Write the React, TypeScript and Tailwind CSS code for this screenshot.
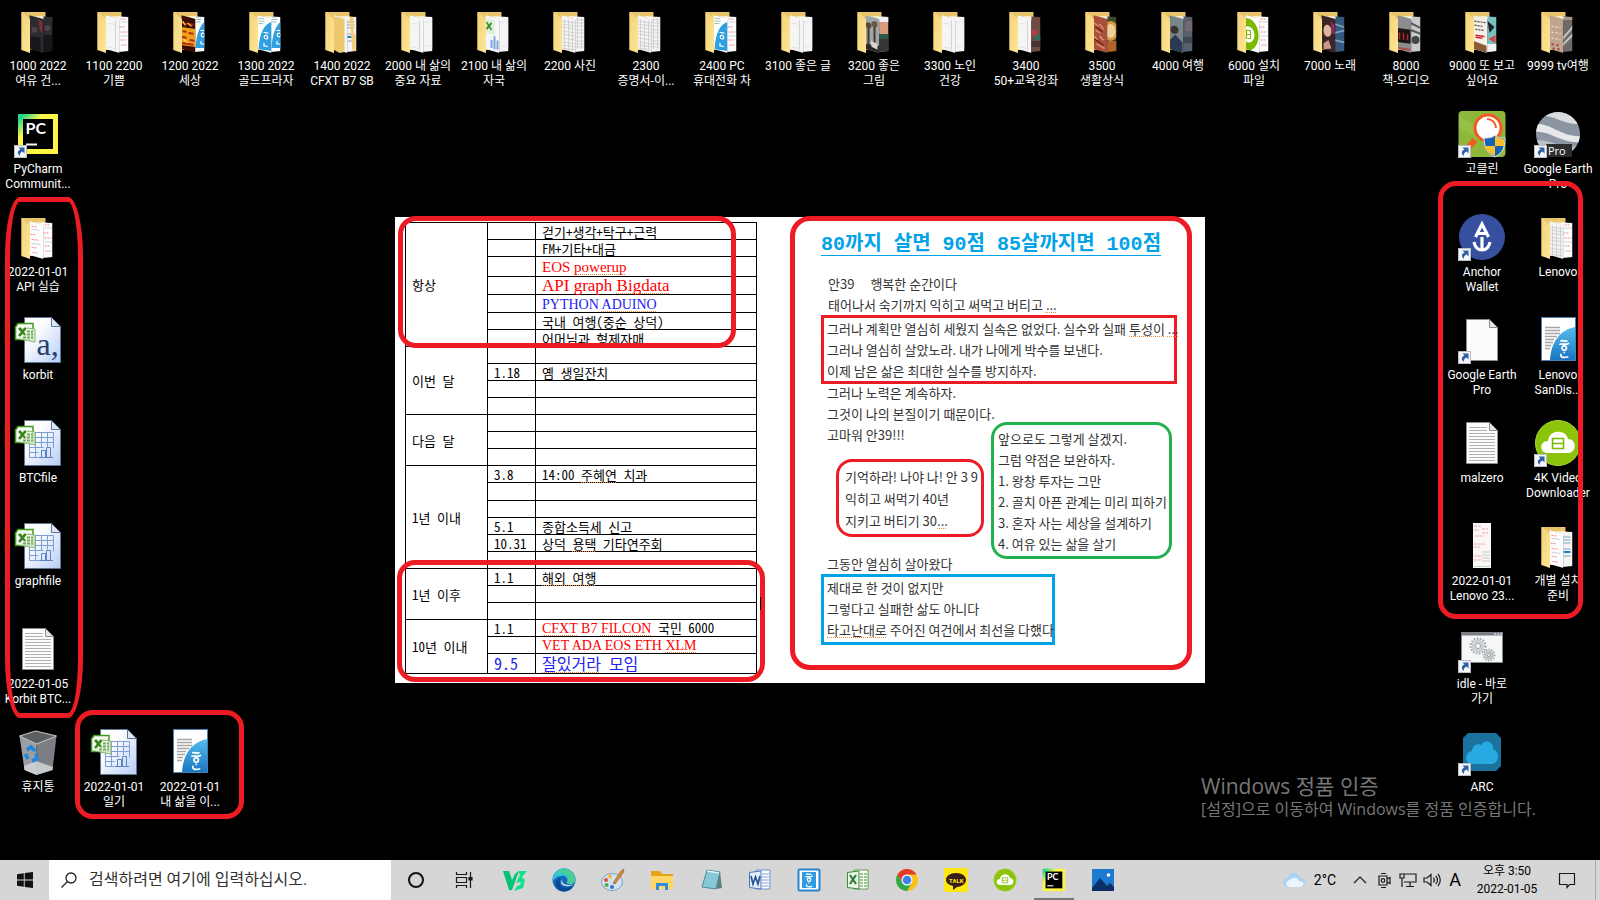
import { useId, type ReactNode } from "react";

/* ---------- pages that stick out of a folder ---------- */

type Art =
  | "blank"
  | "table"
  | "red"
  | "hwp"
  | "excel"
  | "text"
  | "dark"
  | "fire"
  | "palms"
  | "sunset"
  | "market"
  | "meat"
  | "dish"
  | "train"
  | "gray"
  | "green"
  | "face"
  | "sea"
  | "lcd"
  | "machine"
  | "poster"
  | "teal"
  | "beige"
  | "street";

/* Each page is drawn in a 14 x 40 area and clipped by the folder. */
function PageArt({ art }: { art: Art }) {
  switch (art) {
    case "table":
      return (
        <g>
          <rect width="14" height="40" fill="#f4f4f4" />
          <path d="M1 7h12M1 10h12M1 13h12M1 17h12M1 20h12M1 24h12M1 28h12M1 31h12M1 34h12M3 5v31M7 5v31M11 5v31" stroke="#c6c6c6" strokeWidth=".7" />
        </g>
      );
    case "red":
      return (
        <g>
          <rect width="14" height="40" fill="#fdfdfd" />
          <path d="M2 6h6M1 14h5M2 19h7M2 27h6M3 32h6" stroke="#e88" strokeWidth="1" strokeDasharray="2 1" />
          <path d="M2 9h8M2 23h9" stroke="#b9bccb" strokeWidth=".7" />
        </g>
      );
    case "hwp":
      return (
        <g>
          <rect width="14" height="40" fill="#fff" />
          <path d="M1 4h6M1 6.500h6M1 9h5" stroke="#9bb" strokeWidth="1" />
          <path d="M14 6C7 9 2 18 1 35h13z" fill="#2e9fe0" />
          <circle cx="8.500" cy="22" r="1.800" fill="none" stroke="#fff" strokeWidth="1.200" />
          <path d="M6 17.500h5M6.500 28v3h4" stroke="#fff" strokeWidth="1.200" fill="none" />
        </g>
      );
    case "excel":
      return (
        <g>
          <rect width="14" height="40" fill="#f3f6fb" />
          <rect y="5" width="9" height="14" fill="#dff0d6" />
          <path d="M1 8l5 7M6 8l-5 7" stroke="#3b8f2d" strokeWidth="1.8" />
          <path d="M6 33v-8M9 34v-13M12 34v-9" stroke="#7fa6dc" strokeWidth="2" />
        </g>
      );
    case "text":
      return (
        <g>
          <rect width="14" height="40" fill="#f4f4f4" />
          <path d="M1 9h7M1 12h7M1 15h7M1 21h7M1 28h7" stroke="#7fa5c0" strokeWidth="1" />
          <path d="M1 24h7" stroke="#1d84c4" strokeWidth="2" />
        </g>
      );
    case "dark":
      return (
        <g>
          <rect width="14" height="40" fill="#2b2b30" />
          <circle cx="5" cy="15" r="3" fill="#4c4247" />
          <path d="M1 22h10v16H1z" fill="#17171b" />
          <path d="M9 4l4 2v12l-3-4z" fill="#7b2f38" />
        </g>
      );
    case "fire":
      return (
        <g>
          <rect width="14" height="40" fill="#3a0d06" />
          <rect y="13" width="14" height="18" fill="#f0a21c" />
          <path d="M0 9h12M1 17h4M7 18h5M0 23h5M8 25h5M0 29h12" stroke="#b9250b" strokeWidth="2" />
          <path d="M1 7l3 4M6 8l4 3M2 25l4 3" stroke="#ffe356" strokeWidth="1.2" />
        </g>
      );
    case "palms":
      return (
        <g>
          <rect width="14" height="40" fill="#9ba7a8" />
          <path d="M3 12v20M9 10v22" stroke="#4a3526" strokeWidth="2" />
          <circle cx="3" cy="11" r="3" fill="#5b4a35" />
          <circle cx="9" cy="9" r="3" fill="#6b5640" />
          <path d="M0 30h14v10H0z" fill="#2a2624" />
          <path d="M5 26l7 2v6l-6-2z" fill="#d8d3cc" />
        </g>
      );
    case "sunset":
      return (
        <g>
          <rect width="14" height="40" fill="#d99a80" />
          <rect width="14" height="9" fill="#eef0f2" />
          <rect y="21" width="14" height="5" fill="#2c5b49" />
          <rect y="26" width="14" height="14" fill="#37353a" />
        </g>
      );
    case "market":
      return (
        <g>
          <rect width="14" height="40" fill="#704b44" />
          <rect y="17" x="2" width="4" height="6" fill="#c8383a" />
          <rect y="22" x="4" width="7" height="5" fill="#2f6b56" />
          <rect y="28" width="12" height="6" fill="#493236" />
        </g>
      );
    case "meat":
      return (
        <g>
          <rect width="14" height="40" fill="#a9503b" />
          <path d="M1 9l4 3M6 9l4 5M2 16l5 2M0 22l4 3M6 21l4 4M3 29l8 4" stroke="#d98b74" strokeWidth="1.800" />
          <path d="M2 12l7 5M1 25l9 5" stroke="#6d2217" strokeWidth="1.400" />
        </g>
      );
    case "dish":
      return (
        <g>
          <rect width="14" height="40" fill="#3a4a2b" />
          <ellipse cx="4" cy="18" rx="8" ry="10" fill="#d59a45" />
          <ellipse cx="4" cy="18" rx="5" ry="7" fill="#efd09a" />
          <path d="M0 28h14v12H0z" fill="#b5622c" />
        </g>
      );
    case "train":
      return (
        <g>
          <rect width="14" height="40" fill="#78858a" />
          <circle cx="5" cy="15" r="4" fill="#3a3330" />
          <path d="M0 26l6-6 7 7v14H0z" fill="#2b3a52" />
        </g>
      );
    case "gray":
      return (
        <g>
          <rect width="14" height="40" fill="#55606b" />
          <rect x="3" y="8" width="8" height="10" fill="#77666d" />
          <rect y="24" width="14" height="6" fill="#3f4750" />
        </g>
      );
    case "green":
      return (
        <g>
          <rect width="14" height="40" fill="#fff" />
          <ellipse cx="2" cy="20" rx="11" ry="16" fill="#7bb900" />
          <ellipse cx="3" cy="20" rx="6" ry="8" fill="#fff" />
          <path d="M1 16h4v8H1zM1 20h4" stroke="#7bb900" strokeWidth="1" fill="none" />
        </g>
      );
    case "face":
      return (
        <g>
          <rect width="14" height="40" fill="#3a2528" />
          <ellipse cx="6" cy="16" rx="4" ry="6" fill="#e0b39c" />
          <path d="M9 6l4 3v10l-3-2z" fill="#8c2a5b" />
          <path d="M2 29l5-4 3 8-8 2z" fill="#c89a86" />
        </g>
      );
    case "sea":
      return (
        <g>
          <rect width="14" height="40" fill="#37587f" />
          <path d="M0 11l12 4M0 20l12-3M0 27l12 3" stroke="#86a4c4" strokeWidth="1.5" />
        </g>
      );
    case "lcd":
      return (
        <g>
          <rect width="14" height="40" fill="#8a8c8e" />
          <rect y="14" width="13" height="14" fill="#1c1214" />
          <path d="M2 18v7M6 18v7M10 19v6" stroke="#a92a2c" strokeWidth="1.500" />
          <path d="M0 34h13" stroke="#b04949" strokeWidth="2" />
        </g>
      );
    case "machine":
      return (
        <g>
          <rect width="14" height="40" fill="#c7c9ca" />
          <circle cx="5" cy="27" r="4" fill="#454547" />
          <path d="M0 10l12 6M0 17l11 4" stroke="#55585a" strokeWidth="2" />
        </g>
      );
    case "poster":
      return (
        <g>
          <rect width="14" height="40" fill="#f5efe6" />
          <path d="M1 7h11M1 11h9M2 15h9" stroke="#4a4440" strokeWidth="1.200" strokeDasharray="2 1" />
          <path d="M2 21h9M2 23h7" stroke="#d0252b" strokeWidth="1.500" />
          <path d="M0 27l13 3v10H0z" fill="#8b5a36" />
        </g>
      );
    case "teal":
      return (
        <g>
          <rect width="14" height="40" fill="#79bfc0" />
          <path d="M1 8l7 6-5 6z" fill="#1d2224" />
          <path d="M2 26l7-4v8z" fill="#d44545" />
          <rect y="31" width="14" height="9" fill="#f2f2f2" />
        </g>
      );
    case "beige":
      return (
        <g>
          <rect width="14" height="40" fill="#bfa58f" />
          <path d="M2 12h9M2 18h9M2 24h9" stroke="#e8dbcd" strokeWidth="1.500" strokeDasharray="2 2" />
          <path d="M2 30h9M3 34h8" stroke="#b03a35" strokeWidth="2" strokeDasharray="2 3" />
        </g>
      );
    case "street":
      return (
        <g>
          <rect width="14" height="40" fill="#6f6a66" />
          <path d="M0 26l12-14M0 32l12-12" stroke="#c5c2bf" strokeWidth="2" />
          <rect width="14" height="7" fill="#a5968b" />
        </g>
      );
    default:
      return (
        <g>
          <rect width="14" height="40" fill="#f5f5f5" />
          <path d="M10 5v30" stroke="#c9c9c9" strokeWidth=".8" />
          <path d="M2 9h7M2 33h9" stroke="#e2e2e2" strokeWidth="1" />
        </g>
      );
  }
}

function Folder({ front, back, nested = false }: { front: Art; back: Art; nested?: boolean }) {
  const id = useId();
  return (
    <svg viewBox="-0.5 0 48 48" className="size-12" aria-hidden="true">
      <defs>
        <linearGradient id={`${id}g`} x1="0" x2="1" y1="0" y2="1">
          <stop offset="0" stopColor="#f3d27a" />
          <stop offset="1" stopColor="#ffe694" />
        </linearGradient>
        <clipPath id={`${id}f`}>
          <path d="M10 7l19 5v34l-14-4z" />
        </clipPath>
        <clipPath id={`${id}b`}>
          <path d="M20 9l18 1v34l-10 1z" />
        </clipPath>
      </defs>
      <path d="M7 5h24v38H7z" fill="#e9c56a" />
      <g clipPath={`url(#${id}b)`}>
        <g transform="translate(28 6)">
          <PageArt art={back} />
        </g>
        <path d="M18 8h11v4z" fill="#fafafa" />
      </g>
      {nested && <path d="M31 9l4 2v15l2 2v16h-3z" fill="#f3cf74" />}
      <g clipPath={`url(#${id}f)`}>
        <path d="M9 5h20v9z" fill="#eef1f4" />
        <g transform="translate(15 7) skewY(8)">
          <PageArt art={front} />
        </g>
      </g>
      {nested && <path d="M14 9l12 3v33l-5 1-7-4z" fill="#ecc96f" />}
      <path d="M29 13v33" stroke="#00000033" strokeWidth=".6" />
      <path d="M7 5l8.500 7v34L7 43z" fill={`url(#${id}g)`} />
    </svg>
  );
}

/* ---------- file and program icons ---------- */

function ShortcutArrow() {
  return (
    <g>
      <rect x=".5" y="35.500" width="12" height="12" fill="#f4f6f8" stroke="#b9bdc2" />
      <path d="M4.500 37.500h6v6l-2-2c-2 1-3 2-2.600 4.500-3-2.600-2.600-5 .600-6.500z" fill="#2f5fa5" />
    </g>
  );
}

function Svg({ children, shortcut = false }: { children: ReactNode; shortcut?: boolean }) {
  return (
    <svg viewBox="0 0 48 48" className="size-12" aria-hidden="true">
      {children}
      {shortcut && <ShortcutArrow />}
    </svg>
  );
}

function PyCharmArt() {
  const id = useId();
  return (
    <g>
      <defs>
        <linearGradient id={id} x1="0" y1="0" x2="1" y2="1">
          <stop offset="0.080" stopColor="#21d789" />
          <stop offset="0.320" stopColor="#fcf84a" />
          <stop offset="1" stopColor="#fff23f" />
        </linearGradient>
      </defs>
      <rect x="4" y="4" width="40" height="40" fill={`url(#${id})`} />
      <rect x="9" y="9" width="30" height="30" fill="#000" />
      <text x="11.500" y="24" fill="#fff" fontSize="16" fontWeight="700" fontFamily="Lato, sans-serif">PC</text>
      <path d="M12 34.500h11" stroke="#fff" strokeWidth="2" />
    </g>
  );
}

function CalcFile({ kind }: { kind: "csv" | "sheet" }) {
  const id = useId();
  return (
    <Svg>
      <defs>
        <linearGradient id={id} x1="0" y1="0" x2="1" y2="1">
          <stop offset="0.300" stopColor="#fff" />
          <stop offset="1" stopColor="#b7cdf5" />
        </linearGradient>
      </defs>
      <path d="M10.500 1.500h27l9 9v36h-36z" fill={`url(#${id})`} stroke="#5f7693" />
      <path d="M37.500 1.500l9 9h-9z" fill="#dfe7f3" stroke="#5f7693" />
      {kind === "csv" ? (
        <text x="22.500" y="39" fontSize="32" fill="#27406b" fontFamily="Liberation Serif, serif">a,</text>
      ) : (
        <g stroke="#7d9fd4" fill="none">
          <path d="M15.500 13.500h24v16M15.500 18.500h24M15.500 23.500h24M15.500 28.500h14M15.500 33.500h9M15.500 38.500h9M15.500 13.500v25M21.500 13.500v25M27.500 13.500v15M33.500 13.500v14" />
          <path d="M27.500 38.500v-7h4v7M32.500 38.500v-10h4v10M25 38.500h14" stroke="#5c84c4" />
        </g>
      )}
      <path d="M4 7.500h15v16H1.500V11z" fill="#f5faf2" stroke="#3f9b1d" strokeWidth="1.500" />
      <path d="M5 12l7 8M12 12l-7 8" stroke="#37851c" strokeWidth="2.600" />
      <path d="M13 12l8 1v13l-16-3" fill="#e9f3e2" fillOpacity=".8" stroke="#86b673" />
      <path d="M13 15.500h6M13 18.500h6M9 21.500h10" stroke="#6fae57" strokeWidth="2" strokeDasharray="3 1" />
      <path d="M6 12l5 7M11 12l-5 7" stroke="#37851c" strokeWidth="2" />
    </Svg>
  );
}

function HangulMark() {
  return (
    <g fill="none" stroke="#fff" strokeWidth="2" strokeLinecap="round">
      <path d="M1 1c3-1 4 1 7 0M0 5c3-1 6 1 10-1" />
      <circle cx="5" cy="9.500" r="2.600" />
      <path d="M5 14.500v.1M1 17c-.5 4 3 4 8 3" />
    </g>
  );
}

function HwpFile() {
  const id = useId();
  return (
    <Svg>
      <defs>
        <linearGradient id={id} x1="0" y1="0" x2="0" y2="1">
          <stop offset="0" stopColor="#57bdf0" />
          <stop offset="1" stopColor="#1a76c0" />
        </linearGradient>
      </defs>
      <rect x="7.500" y="1.500" width="34" height="43" fill="#fff" stroke="#4d7fb3" />
      <path d="M11 11.500h15M11 14.500h15M11 17.500h15M11 20.500h12M11 23.500h9M11 26.500h8M11 29.500h6M11 32.500h5" stroke="#a6a6a6" strokeWidth="1.500" />
      <path d="M41 11C26 14 17 26 16 44h25z" fill={`url(#${id})`} />
      <g transform="translate(26 24) scale(.85)">
        <HangulMark />
      </g>
    </Svg>
  );
}

function PlainFile({ lines = false, shortcut = false }: { lines?: boolean; shortcut?: boolean }) {
  return (
    <Svg shortcut={shortcut}>
      <path d="M8.500 3.500h23l8 8v33h-31z" fill="#fbfcfc" stroke="#8b8f94" />
      <path d="M31.500 3.500l8 8h-8z" fill="#e3e6e9" stroke="#8b8f94" />
      {lines && (
        <path d="M11 8.500h18M11 11.500h18M11 14.500h26M11 17.500h26M11 20.500h26M11 23.500h26M11 26.500h26M11 29.500h26M11 32.500h26M11 35.500h26M11 38.500h26M11 41.500h26" stroke="#b0b0b0" />
      )}
    </Svg>
  );
}

function RecycleBin() {
  return (
    <Svg>
      <path d="M5.500 8l5 34 12 5V16z" fill="#9b9fa3" />
      <path d="M42.500 8l-4 34-16 5V16z" fill="#7b7f83" />
      <path d="M5.500 8l16-5 21 5-20 8z" fill="#5b5f62" stroke="#c9cccf" />
      <path d="M10 38l12-5 17 6-.500 3-16 5-12-5z" fill="#d4d6d8" fillOpacity=".85" />
      <g fill="none" stroke="#1e88e0" strokeWidth="3.600">
        <path d="M13 22l4-3 4 4" />
        <path d="M22 26l1 5-5 2" />
        <path d="M14 31l-2.500-5" />
      </g>
    </Svg>
  );
}

function GoClean() {
  return (
    <Svg shortcut>
      <rect x=".5" y="1" width="47" height="46" rx="4" fill="#8db63a" />
      <path d="M1 6L47 32v12L1 18z" fill="#a3c84f" fillOpacity=".5" />
      <path d="M17 30L7 41" stroke="#f15a24" strokeWidth="6" />
      <circle cx="30" cy="18" r="13" fill="#fff" stroke="#f15a24" strokeWidth="3" />
      <path d="M29 9c5 0 9 4 9 9" fill="none" stroke="#f15a24" strokeWidth="2" />
      <path d="M37 25c3 3 6 3 10 3 0 9-2 15-10 19-8-4-11-10-11-19 4 0 8 0 11-3z" fill="#1463b4" stroke="#e7edf3" />
      <path d="M37 26c3 2 6 3 9 3v7h-9zM27 36h10v10c-6-3-9-6-10-10z" fill="#fbc02d" />
    </Svg>
  );
}

function EarthPro() {
  const id = useId();
  return (
    <Svg shortcut>
      <defs>
        <clipPath id={id}>
          <circle cx="24" cy="24" r="22" />
        </clipPath>
      </defs>
      <g clipPath={`url(#${id})`}>
        <rect width="48" height="48" fill="#8c96a3" />
        <path d="M0 6c18-4 28 10 48 8V2H8z" fill="#d9dcdf" />
        <path d="M0 14c16-2 28 14 48 12v6C26 34 16 20 0 22z" fill="#e6e8ea" />
        <path d="M0 31c14-4 26 9 48 5v8H0z" fill="#b9c0c8" />
      </g>
      <rect x="12" y="34" width="26" height="13" fill="#2c2d2f" />
      <text x="14" y="44.500" fontSize="11" fill="#fff" fontFamily="Open Sans, sans-serif">Pro</text>
    </Svg>
  );
}

function AnchorWallet() {
  return (
    <Svg shortcut>
      <circle cx="24" cy="24" r="23" fill="#364f9f" />
      <g fill="none" stroke="#fff" strokeWidth="3.200">
        <path d="M17.500 24L24 11l6.500 13M20 20.500h8" />
        <path d="M24 24v13M16 29c1 5 4 8 8 8s7-3 8-8" />
      </g>
    </Svg>
  );
}

function VideoArt() {
  return (
    <g>
      <circle cx="24" cy="24" r="22.500" fill="#8cc40b" stroke="#a9d93a" />
      <path d="M14 34c-9 0-9-12 0-12 1-12 18-12 20-2 9 0 9 14 0 14z" fill="#fff" />
      <path d="M18.500 19.500h11v10h-11zM19 24.500h10" fill="none" stroke="#7bb900" strokeWidth="1.600" />
    </g>
  );
}

function ReceiptImage() {
  return (
    <Svg>
      <rect x="15" y="1" width="18" height="45" fill="#fbf7f7" />
      <path d="M16 4h7M16 8h5M24 7h6M24 11h6M17 14h9M16 22h12M16 25h6M16 34h8M16 38h7" stroke="#f3bfc4" strokeWidth="1.500" strokeDasharray="3 1" />
      <path d="M24 30h8M24 33h8M24 36h8M24 39h8" stroke="#c4c7c9" />
      <path d="M16 44.500h16" stroke="#b9dcc0" />
    </Svg>
  );
}

function IdleFile() {
  return (
    <Svg shortcut>
      <rect x="3.500" y="7.500" width="41" height="30" fill="#f6f7f7" stroke="#85888b" />
      <path d="M3 9h42" stroke="#7b7f85" strokeWidth="3" />
      <path d="M36 9h2M39 9h2M42 9h2" stroke="#fff" />
      <g fill="none" stroke="#a3aaaf">
        <circle cx="20" cy="21" r="7.300" strokeWidth="2.400" strokeDasharray="1.600 1.400" />
        <circle cx="20" cy="21" r="4.600" stroke="#ccd3d7" strokeWidth="3.600" />
        <circle cx="20" cy="21" r="2.600" />
        <circle cx="31" cy="30" r="5.400" strokeWidth="2" strokeDasharray="1.400 1.300" />
        <circle cx="31" cy="30" r="3.200" stroke="#bfc5c9" strokeWidth="3" />
        <circle cx="31" cy="30" r="1.500" />
      </g>
    </Svg>
  );
}

function ArcCloud() {
  return (
    <Svg shortcut>
      <path d="M10 5h28l5 5v28l-5 5H10l-5-5V10z" fill="#1b729f" />
      <path d="M15 36c-9 0-9-11-1-13 0-6 6-8 9-6 3-6 13-4 12 4 7 2 7 15-2 15z" fill="#27aae1" />
    </Svg>
  );
}

/* ---------- desktop ---------- */

type Item = { place: string; lines: string[]; icon: ReactNode };

const items: Item[] = [
  { place: "col-start-1 row-start-1", lines: ["1000 2022", "여유 건..."], icon: <Folder front="dark" back="dark" /> },
  { place: "col-start-2 row-start-1", lines: ["1100 2200", "기쁨"], icon: <Folder front="blank" back="red" /> },
  { place: "col-start-3 row-start-1", lines: ["1200 2022", "세상"], icon: <Folder front="fire" back="hwp" /> },
  { place: "col-start-4 row-start-1", lines: ["1300 2022", "골드프라자"], icon: <Folder front="hwp" back="hwp" /> },
  { place: "col-start-5 row-start-1", lines: ["1400 2022", "CFXT B7 SB"], icon: <Folder front="text" back="text" nested /> },
  { place: "col-start-6 row-start-1", lines: ["2000 내 삶의", "중요 자료"], icon: <Folder front="blank" back="blank" /> },
  { place: "col-start-7 row-start-1", lines: ["2100 내 삶의", "자국"], icon: <Folder front="excel" back="blank" /> },
  { place: "col-start-8 row-start-1", lines: ["2200 사진"], icon: <Folder front="table" back="table" /> },
  { place: "col-start-9 row-start-1", lines: ["2300", "증명서-이..."], icon: <Folder front="table" back="table" /> },
  { place: "col-start-10 row-start-1", lines: ["2400 PC", "휴대전화 차"], icon: <Folder front="hwp" back="red" /> },
  { place: "col-start-11 row-start-1", lines: ["3100 좋은 글"], icon: <Folder front="blank" back="blank" /> },
  { place: "col-start-12 row-start-1", lines: ["3200 좋은", "그림"], icon: <Folder front="palms" back="sunset" /> },
  { place: "col-start-13 row-start-1", lines: ["3300 노인", "건강"], icon: <Folder front="blank" back="blank" /> },
  { place: "col-start-14 row-start-1", lines: ["3400", "50+교육강좌"], icon: <Folder front="blank" back="market" /> },
  { place: "col-start-15 row-start-1", lines: ["3500", "생활상식"], icon: <Folder front="meat" back="dish" /> },
  { place: "col-start-16 row-start-1", lines: ["4000 여행"], icon: <Folder front="train" back="gray" /> },
  { place: "col-start-17 row-start-1", lines: ["6000 설치", "파일"], icon: <Folder front="green" back="red" /> },
  { place: "col-start-18 row-start-1", lines: ["7000 노래"], icon: <Folder front="face" back="sea" /> },
  { place: "col-start-19 row-start-1", lines: ["8000", "책-오디오"], icon: <Folder front="lcd" back="machine" /> },
  { place: "col-start-20 row-start-1", lines: ["9000 또 보고", "싶어요"], icon: <Folder front="poster" back="teal" /> },
  { place: "col-start-21 row-start-1", lines: ["9999 tv여행"], icon: <Folder front="beige" back="street" /> },
  { place: "col-start-1 row-start-2", lines: ["PyCharm", "Communit..."], icon: <Svg shortcut><PyCharmArt /></Svg> },
  { place: "col-start-1 row-start-3", lines: ["2022-01-01", "API 실습"], icon: <Folder front="red" back="red" /> },
  { place: "col-start-1 row-start-4", lines: ["korbit"], icon: <CalcFile kind="csv" /> },
  { place: "col-start-1 row-start-5", lines: ["BTCfile"], icon: <CalcFile kind="sheet" /> },
  { place: "col-start-1 row-start-6", lines: ["graphfile"], icon: <CalcFile kind="sheet" /> },
  { place: "col-start-1 row-start-7", lines: ["2022-01-05", "Korbit BTC..."], icon: <PlainFile lines /> },
  { place: "col-start-1 row-start-8", lines: ["휴지통"], icon: <RecycleBin /> },
  { place: "col-start-2 row-start-8", lines: ["2022-01-01", "일기"], icon: <CalcFile kind="sheet" /> },
  { place: "col-start-3 row-start-8", lines: ["2022-01-01", "내 삶을 이..."], icon: <HwpFile /> },
  { place: "col-start-20 row-start-2", lines: ["고클린"], icon: <GoClean /> },
  { place: "col-start-21 row-start-2", lines: ["Google Earth", "Pro"], icon: <EarthPro /> },
  { place: "col-start-20 row-start-3", lines: ["Anchor", "Wallet"], icon: <AnchorWallet /> },
  { place: "col-start-21 row-start-3", lines: ["Lenovo"], icon: <Folder front="table" back="red" /> },
  { place: "col-start-20 row-start-4", lines: ["Google Earth", "Pro"], icon: <PlainFile shortcut /> },
  { place: "col-start-21 row-start-4", lines: ["Lenovo", "SanDis..."], icon: <HwpFile /> },
  { place: "col-start-20 row-start-5", lines: ["malzero"], icon: <PlainFile lines /> },
  { place: "col-start-21 row-start-5", lines: ["4K Video", "Downloader"], icon: <Svg shortcut><VideoArt /></Svg> },
  { place: "col-start-20 row-start-6", lines: ["2022-01-01", "Lenovo 23..."], icon: <ReceiptImage /> },
  { place: "col-start-21 row-start-6", lines: ["개별 설치", "준비"], icon: <Folder front="red" back="text" /> },
  { place: "col-start-20 row-start-7", lines: ["idle - 바로", "가기"], icon: <IdleFile /> },
  { place: "col-start-20 row-start-8", lines: ["ARC"], icon: <ArcCloud /> },
];

function DesktopItem({ item }: { item: Item }) {
  return (
    <button type="button" className={`${item.place} flex flex-col items-center justify-start pt-[7px]`}>
      {item.icon}
      <span className="mt-1 flex flex-col items-center text-xs leading-[15px] whitespace-nowrap text-white">
        {item.lines.map((line) => (
          <span key={line}>{line}</span>
        ))}
      </span>
    </button>
  );
}

/* ---------- planner table ---------- */

function Typo({ children }: { children: ReactNode }) {
  return (
    <span className="underline decoration-[#f08a3c] decoration-dotted decoration-1 underline-offset-2 [text-decoration-skip-ink:none]">
      {children}
    </span>
  );
}

const SERIF = "font-['Liberation_Serif','Noto_Sans_CJK_KR',serif]";

type Row = { date?: string; dateClass?: string; text?: ReactNode; height: string };
type Group = { title: string; rows: Row[] };

const h17 = "h-[17px]";
const h18 = "h-[18px]";
const h20 = "h-[20px]";

const groups: Group[] = [
  {
    title: "항상",
    rows: [
      { height: h17, text: "걷기+생각+탁구+근력" },
      { height: h17, text: "FM+기타+대금" },
      { height: h20, text: <span className={`${SERIF} text-[15px] text-[#f00]`}>EOS <Typo>powerup</Typo></span> },
      { height: h18, text: <span className={`${SERIF} text-[17px] text-[#f00]`}>API graph <Typo>Bigdata</Typo></span> },
      { height: h18, text: <span className={`${SERIF} text-sm leading-[15px] text-[#22e]`}>PYTHON <Typo>ADUINO</Typo></span> },
      { height: h17, text: "국내 여행(중순 상덕)" },
      { height: h17, text: "어머님과 형제자매" },
    ],
  },
  {
    title: "이번 달",
    rows: [{ height: h17 }, { height: h17, date: "1.18", text: "옘 생일잔치" }, { height: h17 }, { height: h17 }],
  },
  { title: "다음 달", rows: [{ height: h17 }, { height: h17 }, { height: h17 }] },
  {
    title: "1년 이내",
    rows: [
      { height: h17, date: "3.8", text: <>14:00 <Typo>주혜연</Typo> 치과</> },
      { height: h18 },
      { height: h17 },
      { height: h17, date: "5.1", text: "종합소득세 신고" },
      { height: h17, date: "10.31", text: <>상덕 <Typo>용택</Typo> 기타연주회</> },
      { height: h17 },
    ],
  },
  {
    title: "1년 이후",
    rows: [{ height: h17, date: "1.1", text: <Typo>해외 여행</Typo> }, { height: h17 }, { height: h17 }],
  },
  {
    title: "10년 이내",
    rows: [
      {
        height: h17,
        date: "1.1",
        text: (
          <>
            <span className={`${SERIF} text-sm leading-[15px] text-[#f00]`}><Typo>CFXT</Typo> B7 <Typo>FILCON</Typo></span> 국민 6000
          </>
        ),
      },
      { height: h17, text: <span className={`${SERIF} text-sm leading-[15px] text-[#f00]`}>VET ADA EOS ETH <Typo>XLM</Typo></span> },
      {
        height: h20,
        date: "9.5",
        dateClass: "text-base leading-[15px] text-[#22e]",
        text: <span className="text-base leading-[15px] text-[#22e]"><Typo>잘있거라</Typo> 모임</span>,
      },
    ],
  },
];

function Planner() {
  return (
    <table className="w-[352px] table-fixed border-collapse text-left font-['Noto_Sans_Mono_CJK_KR','Noto_Sans_CJK_KR',sans-serif] text-[13px] leading-[15px] whitespace-nowrap text-black">
      <colgroup>
        <col className="w-[82px]" />
        <col className="w-[48px]" />
        <col />
      </colgroup>
      <tbody>
        {groups.map((group) =>
          group.rows.map((row, index) => (
            <tr key={`${group.title}${index}`} className={row.height}>
              {index === 0 && (
                <th scope="rowgroup" rowSpan={group.rows.length} className="border border-black p-0 pl-[6px] font-normal">
                  {group.title}
                </th>
              )}
              <td className={`border border-black p-0 pl-[6px] ${row.dateClass ?? ""}`}>{row.date}</td>
              <td className="border border-black p-0 pl-[6px]">{row.text}</td>
            </tr>
          )),
        )}
      </tbody>
    </table>
  );
}

/* ---------- letter ---------- */

function Letter() {
  return (
    <article className="-mt-px mr-[13px] flex-1 rounded-[20px] border-5 border-[#ed1c24] pt-[14px] pr-2 pb-5 pl-[26px] text-[13px] leading-[21px] whitespace-nowrap text-[#333]">
      <h1 className="w-fit border-b border-[#00a2e8] font-['Liberation_Mono','Noto_Sans_CJK_KR',monospace] text-xl leading-5 font-bold text-[#00a2e8]">
        80까지 살면 90점 85살까지면 100점
      </h1>
      <div className="mt-[17px] pl-[7px]">
        <p className="flex gap-4"><span>안39</span><span>행복한 순간이다</span></p>
        <p>태어나서 숙기까지 익히고 써먹고 버티고 <Typo>...</Typo></p>
      </div>
      <div className="w-[356px] border-3 border-[#ed1c24] pl-[3px]">
        <p>그러나 계획만 열심히 세웠지 실속은 없었다. 실수와 실패 <Typo>투성이</Typo> <Typo>...</Typo></p>
        <p>그러나 열심히 살았노라. 내가 나에게 박수를 보낸다.</p>
        <p>이제 남은 삶은 최대한 실수를 방지하자.</p>
      </div>
      <div className="-mt-0.5 flex items-start">
        <div className="w-[170px]">
          <div className="pl-[6px]">
            <p>그러나 노력은 계속하자.</p>
            <p>그것이 나의 본질이기 때문이다.</p>
            <p>고마워 안39!!!</p>
          </div>
          <div className="mt-[14px] ml-[15px] w-[148px] rounded-2xl border-3 border-[#ed1c24] pt-1 pb-0.5 pl-[6px] leading-[22px]">
            <p>기억하라! 나야 나! 안 3 9</p>
            <p>익히고 써먹기 40년</p>
            <p>지키고 버티기 30<Typo>...</Typo></p>
          </div>
          <p className="mt-4 pl-[6px]">그동안 열심히 살아왔다</p>
        </div>
        <div className="mt-10 w-[181px] rounded-2xl border-3 border-[#22b14c] pt-[3px] pb-0.5 pl-1">
          <p>앞으로도 그렇게 살겠지.</p>
          <p>그럼 약점은 보완하자.</p>
          <p>1. 왕창 투자는 그만</p>
          <p>2. 골치 아픈 관계는 미리 피하기</p>
          <p>3. 혼자 사는 세상을 설계하기</p>
          <p>4. 여유 있는 삶을 살기</p>
        </div>
      </div>
      <div className="w-[234px] border-3 border-[#00a2e8] pb-0.5 pl-[3px]">
        <p>제대로 한 것이 없지만</p>
        <p>그렇다고 실패한 삶도 아니다</p>
        <p><Typo>타고난대로</Typo> 주어진 여건에서 최선을 다했다</p>
      </div>
    </article>
  );
}

/* ---------- taskbar ---------- */

const apps: { name: string; art: ReactNode; active?: boolean }[] = [
  {
    name: "V3",
    art: (
      <g>
        <path d="M0 3h6l3 9 3-6 4-3L9 22H6z" fill="#00c473" />
        <path d="M15 3h9l-5 6 3 3-2 8-9 3 3-5 3-1 1-3-5 1 4-8z" fill="#12e08c" />
      </g>
    ),
  },
  {
    name: "Edge",
    art: (
      <g>
        <circle cx="12" cy="12" r="11.500" fill="#0f6cbd" />
        <path d="M1 10C3-3 22-3 23.500 11c0 5-6 6-9 4 3-4-1-8-5-7-4 0-7 2-8.500 5z" fill="#34c3d8" />
        <path d="M12 1c7 0 11 5 11.500 10 0 5-6 6-9 4C19 8 11 2 3 6c2-3 5-5 9-5z" fill="#5fd46b" fillOpacity=".6" />
        <path d="M9 10c-4 5 1 12 9 9 1 0 3-1 3-1-3 6-11 7-15 3s-3-10 3-11z" fill="#0a4a94" />
        <path d="M10 11c-1 3 2 6 7 6 2 0 4-1 5-2-1 2-5 4-8 3-5 0-6-4-4-7z" fill="#d5d5d5" />
      </g>
    ),
  },
  {
    name: "Paint",
    art: (
      <g>
        <ellipse cx="11" cy="14" rx="10.500" ry="8.500" fill="#cfe4f2" stroke="#7ba3bf" />
        <circle cx="5" cy="12" r="2" fill="#e0503f" />
        <circle cx="9" cy="8.500" r="2" fill="#f2b62c" />
        <circle cx="5.500" cy="17" r="2" fill="#53a848" />
        <circle cx="11" cy="19" r="2" fill="#3a70c4" />
        <path d="M12 15L20 3l3-2-1 4-8 11z" fill="#d88a3a" stroke="#9a5b20" strokeWidth=".7" />
      </g>
    ),
  },
  {
    name: "파일 탐색기",
    art: (
      <g>
        <path d="M1 3h9l2 3h11v15H1z" fill="#e8a317" />
        <path d="M1 8h22v13H1z" fill="#ffd768" />
        <path d="M6 22v-7h12v7h-3v-4H9v4z" fill="#2f8fdc" />
      </g>
    ),
  },
  {
    name: "메모장",
    art: (
      <g>
        <path d="M8 2l13 2-4 17-14-2z" fill="#86c8d6" stroke="#4c8b9b" />
        <path d="M21 4l2 16-6 1z" fill="#5f7f86" />
        <path d="M8 3l12 2" stroke="#e5f2f5" strokeWidth="1.500" />
      </g>
    ),
  },
  {
    name: "Word",
    art: (
      <g>
        <path d="M8 2h14v19H8z" fill="#fff" stroke="#6d8fc6" />
        <path d="M14 6h7M14 9h7M14 12h7M14 15h7M14 18h7" stroke="#7fa0d6" />
        <path d="M1.500 4.500L13 3v18L1.500 19.500z" fill="#e6eefb" stroke="#4a74bd" />
        <path d="M3 8l2 8 2.500-7 2.500 7 2-8" fill="none" stroke="#2b579a" strokeWidth="1.800" />
      </g>
    ),
  },
  {
    name: "한글",
    art: (
      <g>
        <rect x="1.500" y="1.500" width="21" height="21" rx="1" fill="#fff" stroke="#2585cf" strokeWidth="2" />
        <path d="M5 4h14v16H5z" fill="#2f9be3" />
        <g transform="translate(8.800 5.500) scale(.65)">
          <HangulMark />
        </g>
      </g>
    ),
  },
  {
    name: "Excel",
    art: (
      <g>
        <path d="M8 2h14v19H8z" fill="#fff" stroke="#5f9b53" />
        <path d="M14 6h7M14 9h7M14 12h7M14 15h7M14 18h7" stroke="#79b56c" strokeWidth="1.500" strokeDasharray="3 1" />
        <path d="M1.500 4.500L13 3v18L1.500 19.500z" fill="#e8f4e4" stroke="#3d8a3a" />
        <path d="M4 7l6 9M10 7l-6 9" stroke="#2f7d32" strokeWidth="2.200" />
      </g>
    ),
  },
  {
    name: "Chrome",
    art: (
      <g>
        <circle cx="12" cy="12" r="11" fill="#fbc116" />
        <path d="M2.500 6.500A11 11 0 0 1 21.500 6.500H12l-4.800 8.300z" fill="#e33b2e" />
        <path d="M2.500 6.500A11 11 0 0 0 12 23l4.800-8.200H7.200z" fill="#2da94f" />
        <circle cx="12" cy="12" r="5.500" fill="#fff" />
        <circle cx="12" cy="12" r="4.300" fill="#3f7fe8" />
      </g>
    ),
  },
  {
    name: "KakaoTalk",
    art: (
      <g>
        <rect width="24" height="24" rx="2" fill="#ffe812" />
        <path d="M12 5c6 0 10 3 10 7s-5 7-9 7l-4 3v-4c-4-1-7-3-7-6 0-4 4-7 10-7z" fill="#3a1d1d" />
        <text x="5" y="14.500" fontSize="6" fontWeight="700" fill="#ffe812" fontFamily="Roboto, sans-serif">TALK</text>
      </g>
    ),
  },
  {
    name: "4K Video Downloader",
    art: (
      <g transform="scale(.5)">
        <VideoArt />
      </g>
    ),
  },
  {
    name: "PyCharm",
    active: true,
    art: (
      <g transform="translate(-1.500 -1.500) scale(.56)">
        <PyCharmArt />
      </g>
    ),
  },
  {
    name: "사진",
    art: (
      <g>
        <rect x="1" y="1" width="22" height="22" fill="#1c7ad0" />
        <path d="M1 20l8-10 7 8 3-3 4 4v4H1z" fill="#0b2f66" />
        <circle cx="17.500" cy="7" r="1.800" fill="#fff" />
      </g>
    ),
  },
];

function TrayButton({ label, width, children }: { label: string; width: string; children: ReactNode }) {
  return (
    <button type="button" aria-label={label} className={`${width} flex items-center justify-center`}>
      <svg viewBox="0 0 18 18" className="size-[18px]" fill="none" stroke="#1a1a1a" strokeWidth="1.200" aria-hidden="true">
        {children}
      </svg>
    </button>
  );
}

function Taskbar() {
  return (
    <footer className="relative flex h-10 items-stretch bg-[#d6d6d6] text-black">
      <button type="button" aria-label="시작" className="flex w-[49px] items-center justify-center">
        <svg viewBox="0 0 16 16" className="size-4" aria-hidden="true">
          <path d="M0 2.200l6.800-1v6.300H0zM7.700 1.100L16 0v7.500H7.700zM0 8.400h6.800v6.400l-6.800-1zM7.700 8.400H16V16l-8.300-1.100z" fill="#111" />
        </svg>
      </button>
      <label className="flex w-[342px] items-center gap-3 bg-white pl-3">
        <svg viewBox="0 0 16 16" className="size-4 shrink-0" fill="none" stroke="#222" strokeWidth="1.300" aria-hidden="true">
          <circle cx="10" cy="6" r="5" />
          <path d="M6.500 9.500L.5 15.500" />
        </svg>
        <input
          type="text"
          aria-label="검색"
          placeholder="검색하려면 여기에 입력하십시오."
          className="min-w-0 flex-1 bg-transparent text-base outline-none placeholder:text-[#333]"
        />
      </label>
      <button type="button" aria-label="Cortana" className="ml-px flex w-12 items-center justify-center">
        <svg viewBox="0 0 18 18" className="size-[18px]" aria-hidden="true">
          <circle cx="9" cy="9" r="7" fill="none" stroke="#111" strokeWidth="2" />
        </svg>
      </button>
      <button type="button" aria-label="작업 보기" className="flex w-12 items-center justify-center">
        <svg viewBox="0 0 18 18" className="size-[18px]" fill="none" stroke="#1a1a1a" strokeWidth="1.200" aria-hidden="true">
          <path d="M1.500 1v2.500h10V1M1.500 17v-2.500h10V17M1.500 6.500h10v5h-10zM15.500 1v16" />
          <path d="M14 6.500h3v2.500h-3z" fill="#1a1a1a" />
        </svg>
      </button>
      <nav aria-label="앱" className="ml-0.5 flex">
        {apps.map((app) => (
          <button
            key={app.name}
            type="button"
            aria-label={app.name}
            className="flex w-[49px] flex-col items-center justify-end"
          >
            <svg viewBox="0 0 24 24" className="mb-[6px] size-6" aria-hidden="true">
              {app.art}
            </svg>
            <span className={`h-0.5 w-10 ${app.active ? "bg-[#777]" : "bg-transparent"}`} />
          </button>
        ))}
      </nav>
      <div className="ml-auto flex items-stretch">
        <button type="button" className="mr-3 flex items-center gap-2 text-sm">
          <svg viewBox="0 0 24 20" className="h-5 w-6" aria-hidden="true">
            <path d="M6 17C-1 17 0 8 6 8c1-7 11-7 12 0 7 0 7 9 0 9z" fill="#a9d3f3" />
            <path d="M8 17c-5 0-5-6 0-7 2-3 8-3 9 1 6 0 6 6 1 6z" fill="#e9f5fd" />
          </svg>
          2°C
        </button>
        <TrayButton label="숨겨진 아이콘 표시" width="w-6"><path d="M3 12l6-6 6 6" /></TrayButton>
        <TrayButton label="모임 시작" width="w-6"><path d="M4 5h8v9H4zM12 8l3-1.500v6L12 11M6 2.500h5M6 16.500h5" /><circle cx="8" cy="9.500" r="1.800" /></TrayButton>
        <TrayButton label="네트워크" width="w-6"><path d="M5 3h12v8H5M11 11v4M7 15.500h8M1 3h4v4H1zM3 7v9" /></TrayButton>
        <TrayButton label="볼륨" width="w-6"><path d="M1 7v4h3l4 3.500v-11L4 7zM10.500 6.500c1 1.500 1 3.500 0 5M12.800 4.800c2 2.500 2 6 0 8.400M15 3c3 3.500 3 8.500 0 12" /></TrayButton>
        <button type="button" aria-label="입력 언어" className="w-[22px] text-center text-lg">A</button>
        <time className="flex w-[82px] flex-col items-center justify-center text-xs leading-[18px]">
          <span>오후 3:50</span>
          <span>2022-01-05</span>
        </time>
        <TrayButton label="알림" width="w-[38px]"><path d="M1.500 2.500h15v11h-5l-2.500 3v-3h-7.500z" /></TrayButton>
        <div className="ml-[9px] w-[5px] border-l border-[#a8a8a8]" />
      </div>
    </footer>
  );
}

/* ---------- page ---------- */

export default function App() {
  return (
    <div className="relative flex min-h-screen flex-col bg-black font-['Roboto','Noto_Sans_CJK_KR',sans-serif]">
      {/* wallpaper */}
      <div className="absolute inset-0 flex items-center justify-center">
        <section className="relative flex w-[810px] items-start bg-white font-['Noto_Sans_CJK_KR',sans-serif]">
          <div className="w-[395px] shrink-0 pt-[5px] pb-[9px] pl-[10px]">
            <Planner />
          </div>
          <Letter />
          <div className="absolute -top-px left-[3px] h-[132px] w-[338px] rounded-[18px] border-5 border-[#ed1c24]" />
          <div className="absolute bottom-px left-0.5 h-[122px] w-[368px] rounded-[18px] border-5 border-[#ed1c24]" />
          <div className="absolute top-[380px] left-[365px] h-[13px] w-px bg-black" />
        </section>
      </div>

      <main className="relative grid flex-1 auto-rows-[103px] grid-cols-[repeat(21,minmax(0,1fr))] content-start pr-1">
        {items.map((item) => (
          <DesktopItem key={item.place} item={item} />
        ))}
        {/* freehand frames round groups of icons */}
        <div className="pointer-events-none absolute top-[197px] left-[5px] h-[521px] w-[78px] rounded-[15px/60px] border-5 border-[#ed1c24]" />
        <div className="pointer-events-none absolute top-[710px] left-[75px] h-[109px] w-[169px] rounded-[18px] border-5 border-[#ed1c24]" />
        <div className="pointer-events-none absolute top-[181px] right-[17px] h-[438px] w-[145px] rounded-[18px] border-5 border-[#ed1c24]" />
        <aside className="absolute right-[63px] bottom-10 w-[336px] font-['Open_Sans','Noto_Sans_CJK_KR',sans-serif] whitespace-nowrap text-[#777]">
          <p className="text-[21px] leading-6">Windows 정품 인증</p>
          <p className="text-base leading-[22px]">[설정]으로 이동하여 Windows를 정품 인증합니다.</p>
        </aside>
      </main>

      <Taskbar />
    </div>
  );
}
